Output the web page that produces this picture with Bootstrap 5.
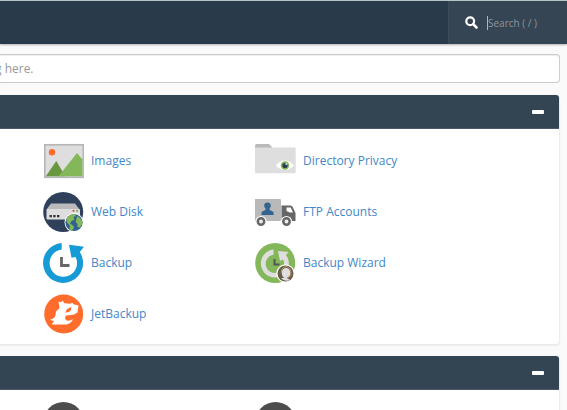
<!DOCTYPE html>
<html lang="en">
<head>
<meta charset="utf-8">
<meta name="viewport" content="width=device-width, initial-scale=1">
<title>cPanel - Tools</title>
<link href="https://cdn.jsdelivr.net/npm/bootstrap@5.3.0/dist/css/bootstrap.min.css" rel="stylesheet">
<style>
body { font-family: "Open Sans", sans-serif; font-size: 12px; line-height: 18px; background: #fafafa; }
.top-bar { height: 44px; background: #293a4a; border-top: 1px solid #b9c4c6; box-shadow: 0 1px 2px rgba(0,0,0,.3); }
.quick-search { width: 119px; padding-left: 16px; background: #354553; border-left: 1px solid #3c4b58; }
.quick-search input { width: 64px; height: 14px; font-size: 10px; line-height: 14px; color: #ddd; background: transparent; border: 0; border-left: 1px solid #aeb6bc; border-radius: 0; outline: 0; }
.quick-search input::placeholder { color: #8d969d; opacity: 1; }
.quick-search svg { margin-right: 9px; }
.content { padding: 10px 7px 0 0; }
.find-box { height: 29px; padding: 0; font-size: 12px; text-indent: -5px; border: 1px solid #ccc; border-left: 0; border-radius: 0 4px 4px 0; box-shadow: inset 0 1px 1px rgba(0,0,0,.075); }
.find-box::placeholder { color: #999; opacity: 1; }
.tool-panel { margin: 12px 1px 0 0; background: #fff; border-radius: 0 3px 3px 0; box-shadow: 0 1px 1px 1px #ebebeb; }
.tool-head { height: 34px; padding-right: 10px; background: #334452; border-bottom: 1px solid #4a5a69; border-radius: 0 3px 0 0; }
.tool-head button { width: 22px; height: 22px; }
.tool-grid { display: grid; grid-template-columns: 212px 212px; grid-auto-rows: 50px; margin: 0 0 0 43px; row-gap: 1px; }
.tool-body { padding: 7px 0 5px; }
.tool-link { gap: 7px; color: #4287c7; }
</style>
</head>
<body class="vh-100 overflow-hidden">
<header class="top-bar d-flex justify-content-end position-relative">
  <label class="quick-search d-flex align-items-center" for="quick">
    <svg width="13" height="13" viewBox="0 0 13 13" aria-hidden="true"><circle cx="5.2" cy="5.2" r="3.9" fill="none" stroke="#fff" stroke-width="2.2"/><path d="M8.2 8.2l3.3 3.3" stroke="#fff" stroke-width="2.6" stroke-linecap="round"/></svg>
    <input id="quick" class="p-0" type="text" placeholder="Search ( / )">
  </label>
</header>
<main class="content">
  <input class="find-box form-control" type="text" aria-label="Find functions" placeholder="g here.">

  <section class="tool-panel">
    <div class="tool-head d-flex align-items-center justify-content-end">
      <button class="btn p-0 border-0 d-flex align-items-center justify-content-center" type="button" aria-label="Collapse files"><svg width="12" height="4" viewBox="0 0 12 4"><rect width="12" height="4" rx="1" fill="#fff"/></svg></button>
    </div>
    <div class="tool-body">
      <div class="tool-grid">
        <a class="tool-link d-flex align-items-center text-decoration-none" href="#">
          <svg width="41" height="40" viewBox="0 0 41 40"><rect x="1.8" y="3.8" width="38.500" height="32.500" fill="#dedede" stroke="#b7b7b7" stroke-width="1.700"/><circle cx="9" cy="11.300" r="3.200" fill="#ff6c2c"/><path d="M2.800 35.300L13.300 20l9 15.300z" fill="#689740"/><path d="M15.500 35.300L34 12l5.400 6.500v16.800z" fill="#84b75a"/></svg>
          <span>Images</span></a>
        <a class="tool-link d-flex align-items-center text-decoration-none" href="#">
          <svg width="41" height="40" viewBox="0 0 41 40"><path d="M0 7V4.800q0-1.800 1.800-1.800H14l3 3v4H0z" fill="#b9b9b9"/><path d="M0 6.500h39.500q1.200 0 1.200 1.200V31q0 1.300-1.200 1.300H1.200Q0 32.300 0 31z" fill="#dedede"/><path d="M20.800 24.500q9.200-10 18.200 0q-9 9-18.200 0z" fill="#fff"/><circle cx="30" cy="24.500" r="4.200" fill="#84b75a"/><circle cx="30" cy="24.500" r="2.600" fill="#293f56"/><circle cx="31.300" cy="23" r="1" fill="#dbe5ef"/></svg>
          <span>Directory Privacy</span></a>
        <a class="tool-link d-flex align-items-center text-decoration-none" href="#">
          <svg width="41" height="40" viewBox="0 0 41 40"><circle cx="20.200" cy="20" r="20" fill="#2f405a"/><path d="M8 11.500h24l4.500 6H3.500z" fill="#bababa"/><rect x="3.500" y="17" width="33.500" height="10.500" rx="1" fill="#dedede"/><path d="M6.500 23h2.400v2.200H6.500zM10.200 23h2.400v2.200h-2.400zM14 23h2.400v2.200H14z" fill="#333"/><circle cx="30.500" cy="18.800" r="1" fill="#e33b2e"/><circle cx="34" cy="18.800" r="1" fill="#69a841"/><circle cx="31" cy="30.500" r="9.500" fill="#fff"/><circle cx="31" cy="30.500" r="8.600" fill="#2f6290"/><path d="M23.200 27q3-5 8.300-5l1.500 2-2.500 1 1 2.500-3 1.500-1.500 2.500 3 2 1 2-2 3.200q-1.800-.5-2.500-1.700l.5-3.500-3-3zM34.200 24l2.300 1.500q3 3 3 6l-2.500 4-2.500-.5v-3l-1.800-2 .6-3z" fill="#84b75a"/></svg>
          <span>Web Disk</span></a>
        <a class="tool-link d-flex align-items-center text-decoration-none" href="#">
          <svg width="41" height="40" viewBox="0 0 41 40"><rect x="-1" y="7" width="27" height="22" rx="1.300" fill="#b9b9b9"/><path d="M26.500 13.500h9q1.500 0 2.200 1.500l2.800 6v8h-14z" fill="#666"/><path d="M31.500 15.500h4.200l2.300 5h-3.200l-3.300-1.500z" fill="#fff"/><path d="M6.500 23v-2.200q0-1.400 4-2.800v-1.500Q9.200 15.500 9.200 13.700q0-3.200 3.300-3.200t3.300 3.200q0 1.800-1.200 2.800V18q4 1.400 4 2.800V23z" fill="#32658f"/><g fill="#fff"><circle cx="6" cy="29.500" r="5.600"/><circle cx="31.500" cy="29.500" r="5.600"/></g><g fill="#ededed" stroke="#666" stroke-width="2.500"><circle cx="6" cy="29.500" r="3.200"/><circle cx="31.500" cy="29.500" r="3.200"/></g></svg>
          <span>FTP Accounts</span></a>
        <a class="tool-link d-flex align-items-center text-decoration-none" href="#">
          <svg width="41" height="40" viewBox="0 0 41 40"><path d="M18.700 0v6.500A13.700 13.700 0 1 0 32.600 14L28.500 14.700 26 1.700l15 2-4.200 5.300A20 20 0 1 1 18.700 0z" fill="#179bd7"/><path d="M18.500 14v8.500h8" fill="none" stroke="#666" stroke-width="2.800"/></svg>
          <span>Backup</span></a>
        <a class="tool-link d-flex align-items-center text-decoration-none" href="#">
          <svg width="41" height="40" viewBox="0 0 41 40"><circle cx="20.200" cy="20" r="20" fill="#84b75a"/><path d="M18.500 6.500v5.200A9.200 9.200 0 1 0 28 16.500L25 18 23 8l10.500 1-2.500 3A14 14 0 1 1 18.500 6.500z" fill="#dedede"/><path d="M19.500 16v5.500h5" fill="none" stroke="#555" stroke-width="2"/><circle cx="30.500" cy="30.500" r="9.300" fill="#fff"/><circle cx="30.500" cy="30.500" r="8" fill="#685b4c"/><ellipse cx="31" cy="30" rx="4.300" ry="5.200" fill="#dedede"/><path d="M26 35.500q5-2 9 1.500-4 2-9-1.500z" fill="#dedede"/><path d="M26 29.500q1-6 5-6t5 5.500v3q-1.500 2.500-4 2.500" fill="none" stroke="#b89560" stroke-width="1"/></svg>
          <span>Backup Wizard</span></a>
        <a class="tool-link d-flex align-items-center text-decoration-none" href="#">
          <svg width="41" height="40" viewBox="0 0 41 40"><circle cx="20.700" cy="20" r="19.500" fill="#ff6c2c"/><path d="M15.500 7.500l2 .8 2.300-1.600 1.500 2.500 5.500.6 2.700-.8 1 1.300 5 1.300-1 6.900-4 2.300-7.500.7q-2 3 .3 4.800 2.700 1 6.700-1-2 4.500-6.500 5.200H8.700l2.500-3.800q-2.500.5-4-1.200 4.500-.7 5.300-4.500l.5-3.500 3.500-3.500z" fill="#fff"/><path d="M22.300 18.500q1.700-5 6.200-5.300l-.7 3q-1.500 2.500-5.500 2.300z" fill="#ff6c2c"/></svg>
          <span>JetBackup</span></a>
      </div>
    </div>
  </section>

  <section class="tool-panel">
    <div class="tool-head d-flex align-items-center justify-content-end">
      <button class="btn p-0 border-0 d-flex align-items-center justify-content-center" type="button" aria-label="Collapse databases"><svg width="12" height="4" viewBox="0 0 12 4"><rect width="12" height="4" rx="1" fill="#fff"/></svg></button>
    </div>
    <div class="tool-body">
      <div class="tool-grid">
        <a class="tool-link d-flex align-items-center" href="#" aria-label="Database tool"><svg width="41" height="40" viewBox="0 0 41 40"><circle cx="20.500" cy="20" r="20" fill="#4d4d4d"/></svg></a>
        <a class="tool-link d-flex align-items-center" href="#" aria-label="Database wizard"><svg width="41" height="40" viewBox="0 0 41 40"><circle cx="20.500" cy="20" r="20" fill="#4d4d4d"/></svg></a>
      </div>
    </div>
  </section>
</main>
<script src="https://cdn.jsdelivr.net/npm/bootstrap@5.3.0/dist/js/bootstrap.bundle.min.js"></script>
</body>
</html>
